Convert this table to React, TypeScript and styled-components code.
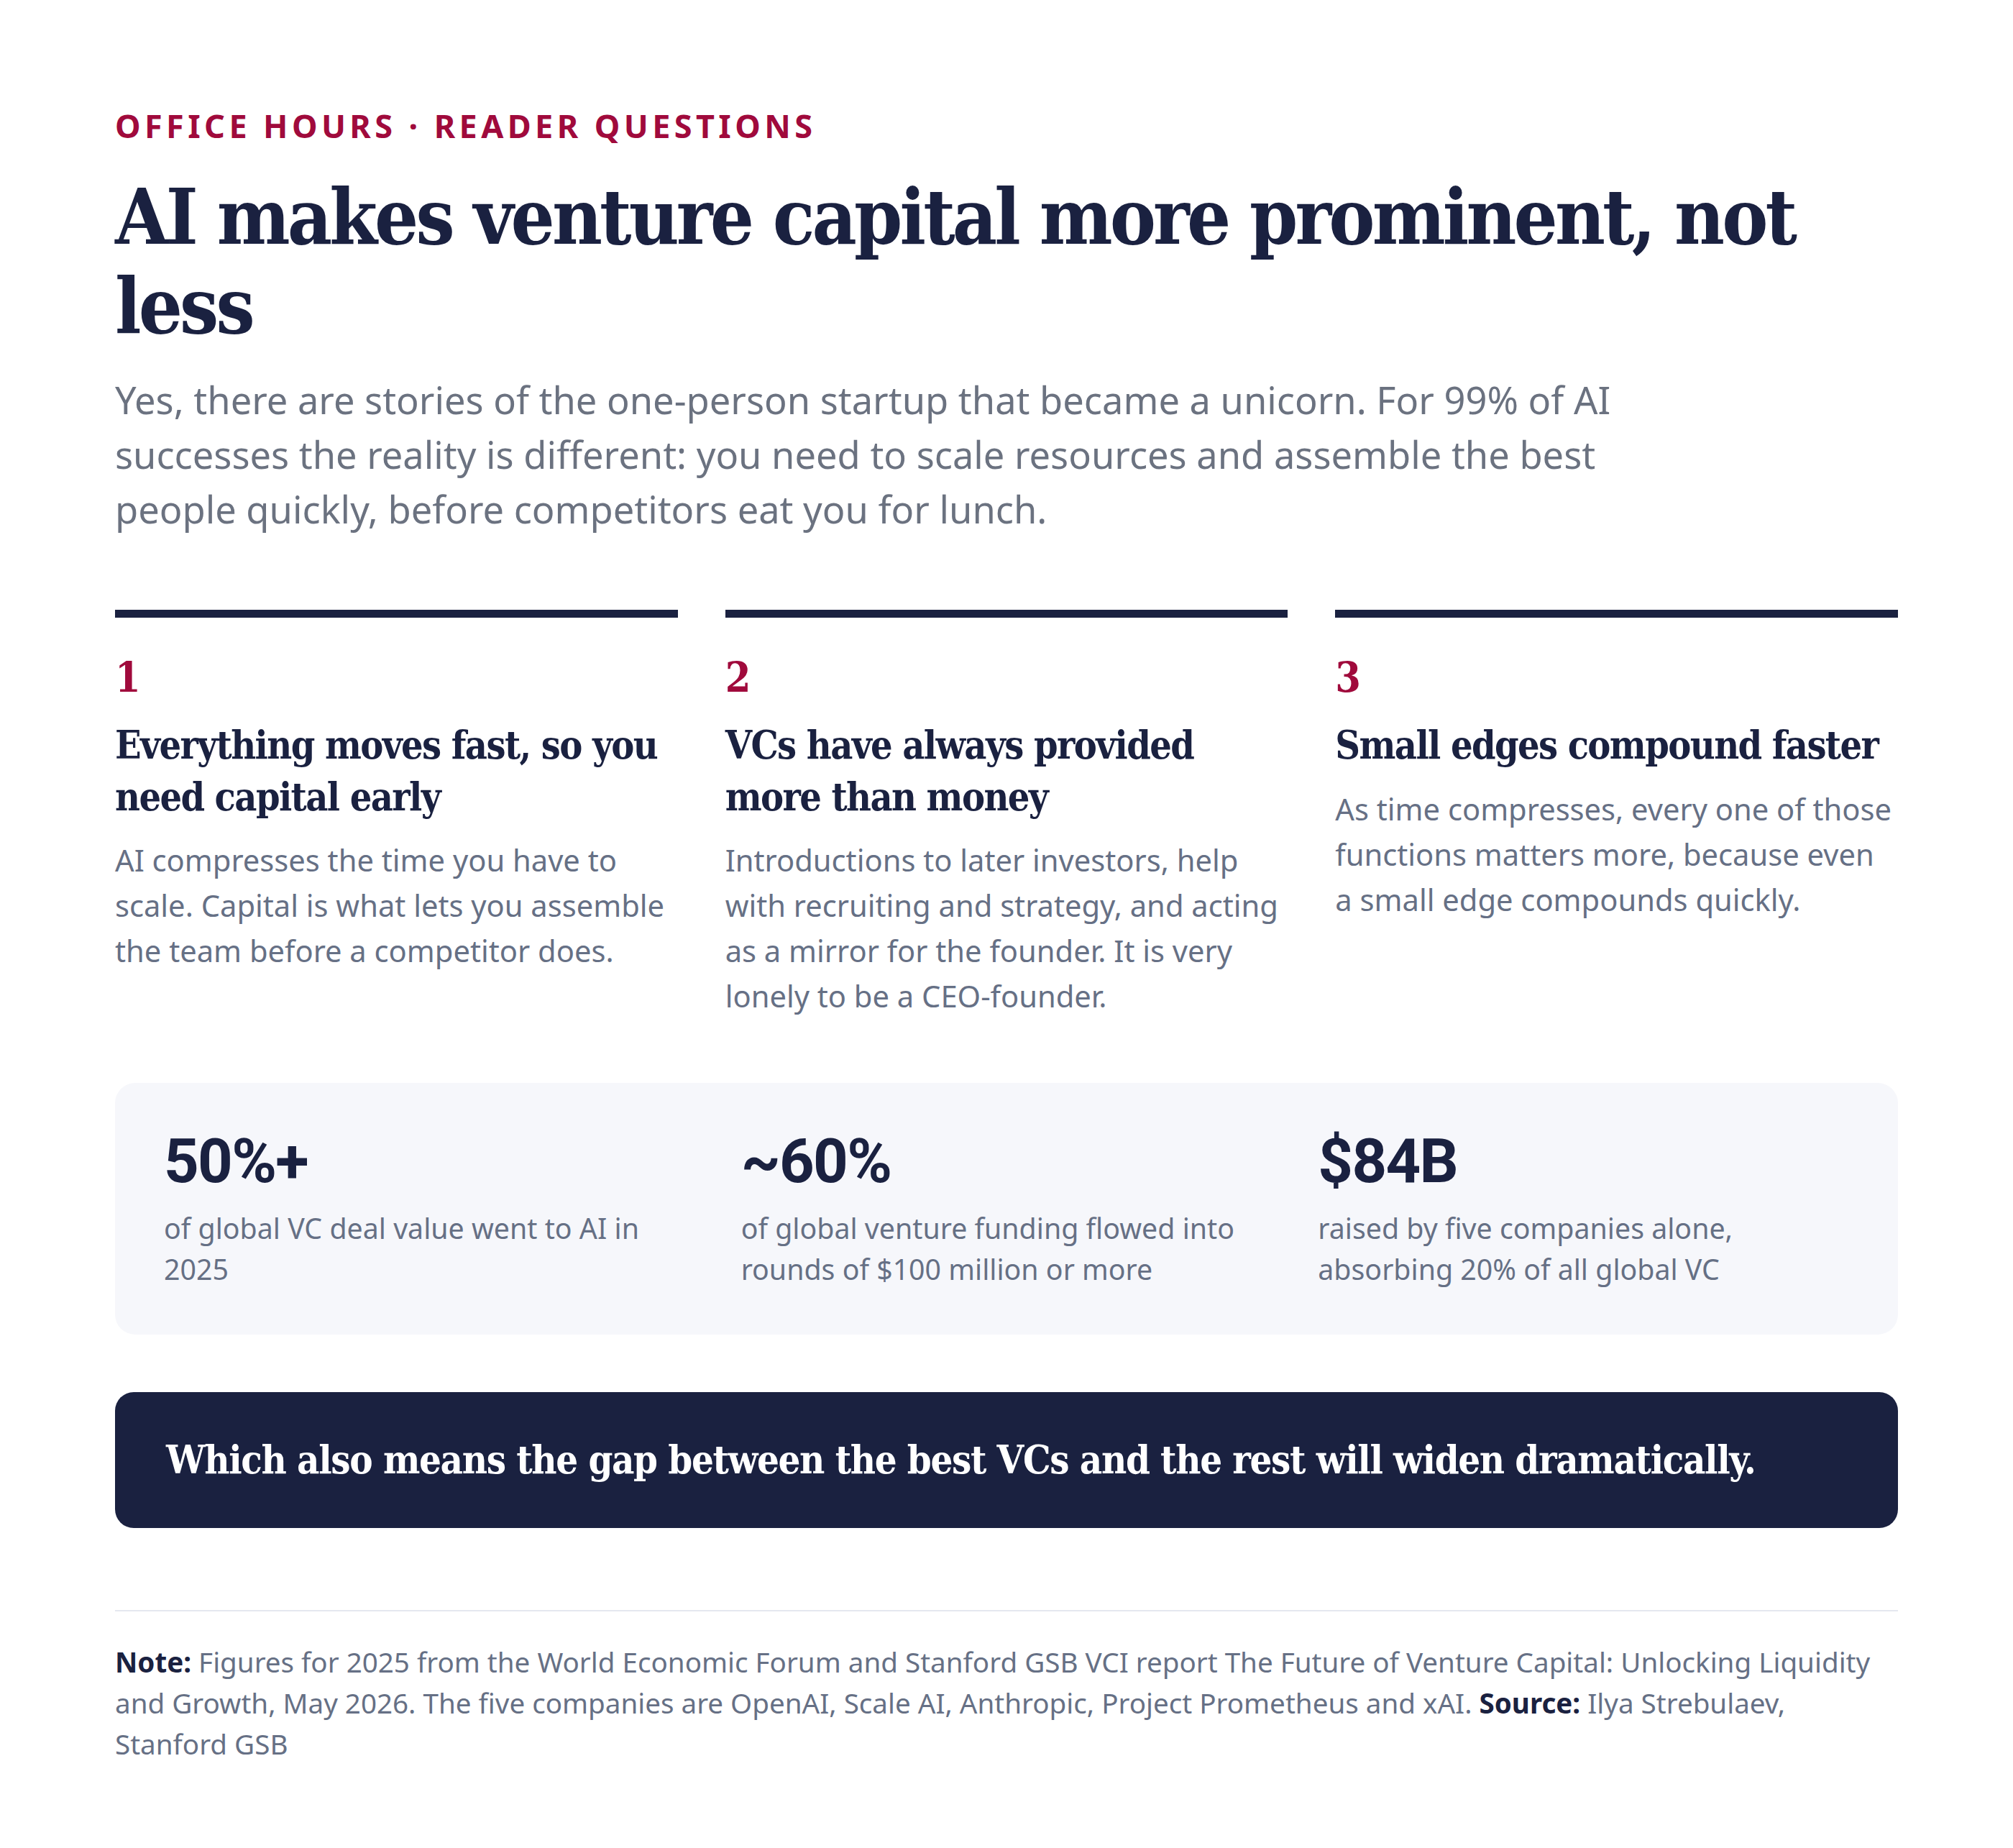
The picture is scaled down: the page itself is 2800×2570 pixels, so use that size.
import React from "react";
import styled, { createGlobalStyle } from "styled-components";

const GlobalStyle = createGlobalStyle`
  html, body { margin: 0; padding: 0; background: #ffffff; }
  * { box-sizing: border-box; }
`;

const SERIF = `"DejaVu Serif Condensed", "DejaVu Serif", serif`;
const SANS = `"Noto Sans", "Open Sans", sans-serif`;
const NAVY = "#1a2140";
const CRIMSON = "#a00a3c";
const GRAY = "#6b7280";
const BODY_GRAY = "#667085";

const Page = styled.main`
  padding: 143px 160px 120px;
  font-family: ${SANS};
  color: ${NAVY};
`;

const Eyebrow = styled.div`
  font-family: ${SANS};
  font-weight: 700;
  font-size: 45px;
  line-height: 63px;
  letter-spacing: 0.12em;
  text-transform: uppercase;
  color: ${CRIMSON};
`;

const Title = styled.h1`
  margin: 34px 0 0;
  font-family: ${SERIF};
  font-stretch: condensed;
  font-weight: 700;
  font-size: 107px;
  line-height: 124px;
  letter-spacing: -0.036em;
  color: ${NAVY};
`;

const Lede = styled.p`
  margin: 30px 0 0;
  max-width: 2143px;
  font-size: 52.4px;
  line-height: 76px;
  color: ${GRAY};
`;

const Columns = styled.section`
  margin-top: 102px;
  display: grid;
  grid-template-columns: repeat(3, 1fr);
  column-gap: 66px;
`;

const Column = styled.article`
  border-top: 11px solid ${NAVY};
  padding-top: 54px;
`;

const Num = styled.div`
  font-family: ${SERIF};
  font-stretch: condensed;
  font-weight: 700;
  font-size: 57px;
  line-height: 57px;
  color: ${CRIMSON};
`;

const ColHeading = styled.h2`
  margin: 31px 0 0;
  font-family: ${SERIF};
  font-stretch: condensed;
  font-weight: 700;
  font-size: 53.5px;
  line-height: 71.5px;
  letter-spacing: -0.03em;
  color: ${NAVY};
`;

const ColBody = styled.p`
  margin: 20px 0 0;
  font-size: 41.7px;
  line-height: 63px;
  color: ${BODY_GRAY};
`;

const StatBox = styled.section`
  margin-top: 90px;
  background: #f6f7fb;
  border-radius: 28px;
  padding: 67px 68px 62px;
  display: grid;
  grid-template-columns: repeat(3, 1fr);
  column-gap: 64px;
`;

const Stat = styled.div``;

const StatValue = styled.div`
  font-family: Roboto, "Liberation Sans", sans-serif;
  font-weight: 700;
  font-size: 85px;
  line-height: 85px;
  letter-spacing: -0.02em;
  color: ${NAVY};
`;

const StatLabel = styled.p`
  margin: 22px 0 0;
  font-size: 39.3px;
  line-height: 57px;
  color: ${BODY_GRAY};
`;

const Banner = styled.section`
  margin-top: 80px;
  background: ${NAVY};
  border-radius: 26px;
  padding: 58px 71px 58px;
  font-family: ${SERIF};
  font-stretch: condensed;
  font-weight: 700;
  font-size: 54px;
  line-height: 73px;
  letter-spacing: -0.025em;
  color: #ffffff;
`;

const Footnote = styled.footer`
  margin-top: 114px;
  border-top: 2px solid #e5e7ef;
  padding-top: 42px;
  font-size: 38.6px;
  line-height: 57px;
  color: ${BODY_GRAY};
`;

const Strong = styled.strong`
  font-weight: 700;
  color: ${NAVY};
`;

const points = [
  {
    n: "1",
    h: "Everything moves fast, so you need capital early",
    b: "AI compresses the time you have to scale. Capital is what lets you assemble the team before a competitor does.",
  },
  {
    n: "2",
    h: "VCs have always provided more than money",
    b: "Introductions to later investors, help with recruiting and strategy, and acting as a mirror for the founder. It is very lonely to be a CEO-founder.",
  },
  {
    n: "3",
    h: "Small edges compound faster",
    b: "As time compresses, every one of those functions matters more, because even a small edge compounds quickly.",
  },
];

const stats = [
  { v: "50%+", l: "of global VC deal value went to AI in 2025" },
  { v: "~60%", l: "of global venture funding flowed into rounds of $100 million or more" },
  { v: "$84B", l: "raised by five companies alone, absorbing 20% of all global VC" },
];

export default function App() {
  return (
    <>
      <GlobalStyle />
      <Page>
        <Eyebrow>Office Hours · Reader Questions</Eyebrow>
        <Title>AI makes venture capital more prominent, not less</Title>
        <Lede>
          Yes, there are stories of the one-person startup that became a unicorn. For 99% of AI
          successes the reality is different: you need to scale resources and assemble the best
          people quickly, before competitors eat you for lunch.
        </Lede>
        <Columns>
          {points.map((p) => (
            <Column key={p.n}>
              <Num>{p.n}</Num>
              <ColHeading>{p.h}</ColHeading>
              <ColBody>{p.b}</ColBody>
            </Column>
          ))}
        </Columns>
        <StatBox>
          {stats.map((s) => (
            <Stat key={s.v}>
              <StatValue>{s.v}</StatValue>
              <StatLabel>{s.l}</StatLabel>
            </Stat>
          ))}
        </StatBox>
        <Banner>Which also means the gap between the best VCs and the rest will widen dramatically.</Banner>
        <Footnote>
          <Strong>Note:</Strong> Figures for 2025 from the World Economic Forum and Stanford GSB VCI
          report The Future of Venture Capital: Unlocking Liquidity and Growth, May 2026. The five
          companies are OpenAI, Scale AI, Anthropic, Project Prometheus and xAI.{" "}
          <Strong>Source:</Strong> Ilya Strebulaev, Stanford GSB
        </Footnote>
      </Page>
    </>
  );
}
